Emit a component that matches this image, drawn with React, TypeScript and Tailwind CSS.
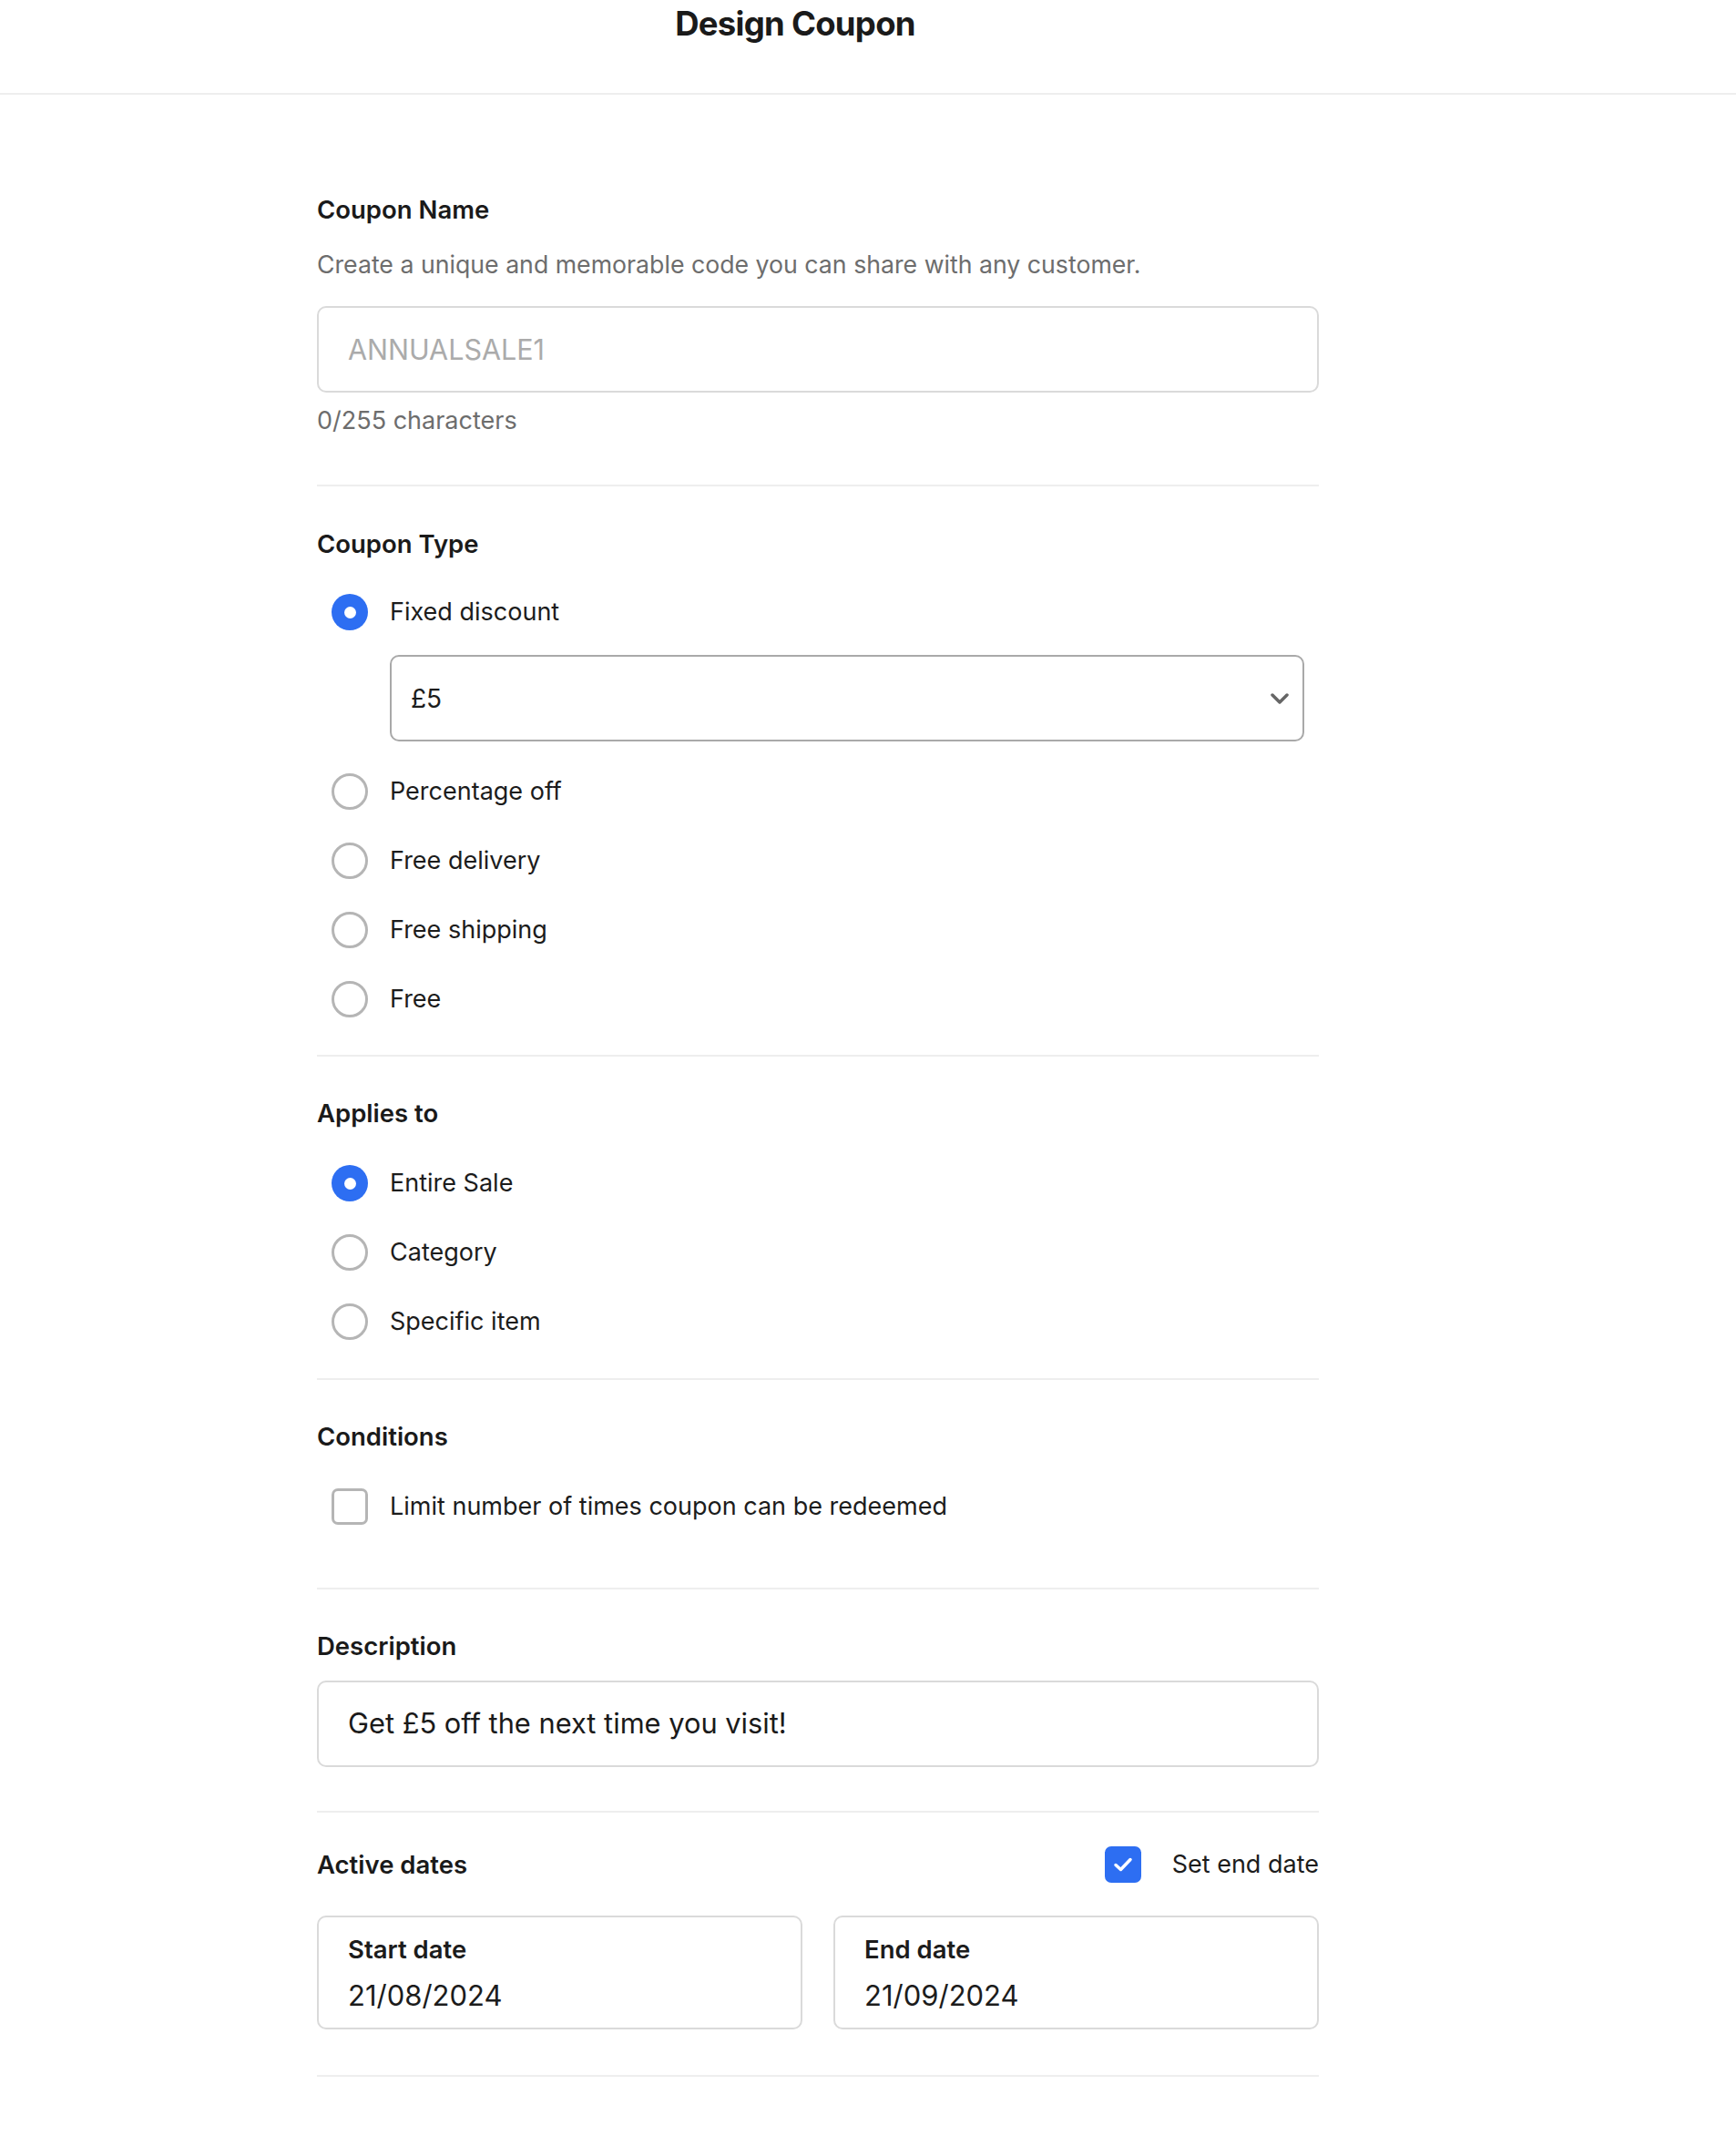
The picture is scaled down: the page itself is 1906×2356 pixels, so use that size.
import { useState } from "react";

type RadioRowProps = {
  label: string;
  checked?: boolean;
};

function RadioRow({ label, checked }: RadioRowProps) {
  return (
    <div className="flex h-[76px] items-center">
      <div className="flex w-[80px] items-center pl-4">
        {checked ? (
          <span className="flex h-10 w-10 items-center justify-center rounded-full bg-[#2d6ef2]">
            <span className="h-[13px] w-[13px] rounded-full bg-white" />
          </span>
        ) : (
          <span className="h-10 w-10 rounded-full border-[3px] border-[#b5b5b5]" />
        )}
      </div>
      <span className="text-[27px] leading-10 text-[#1c1c1c]">{label}</span>
    </div>
  );
}

function Divider({ className }: { className: string }) {
  return <div className={`h-[2px] w-full bg-[#eeeeee] ${className}`} />;
}

function SectionTitle({ children, className }: { children: React.ReactNode; className?: string }) {
  return (
    <h2 className={`text-[27.5px] leading-10 font-semibold text-[#1a1a1a] ${className ?? ""}`}>
      {children}
    </h2>
  );
}

export default function App() {
  const [endDate] = useState(true);

  return (
    <div
      className="min-h-[2356px] w-full bg-white"
      style={{ fontFamily: "Inter, 'Liberation Sans', sans-serif" }}
    >
      <header className="flex h-[104px] items-start border-b-2 border-[#eeeeee]">
        <h1 className="w-[1746px] pt-[2px] text-center text-[36.5px] leading-[48px] font-bold tracking-[-0.02em] text-[#1a1a1a]">
          Design Coupon
        </h1>
      </header>

      <main className="ml-[348px] w-[1100px] pt-[106px]">
        {/* Coupon name */}
        <SectionTitle>Coupon Name</SectionTitle>
        <p className="mt-5 text-[26.7px] leading-10 text-[#6d6d6d]">
          Create a unique and memorable code you can share with any customer.
        </p>
        <input
          className="mt-[26px] h-[95px] w-full rounded-[10px] border-2 border-[#dadada] px-8 text-[30.5px] text-[#1a1a1a] outline-none placeholder:text-[#ababab]"
          placeholder="ANNUALSALE1"
        />
        <p className="mt-[11px] text-[27px] leading-10 text-[#6d6d6d]">0/255 characters</p>
        <Divider className="mt-[50px]" />

        {/* Coupon type */}
        <SectionTitle className="mt-[43px]">Coupon Type</SectionTitle>
        <div className="mt-[17px]">
          <RadioRow label="Fixed discount" checked />
          <div className="ml-[80px] mt-[9px] mr-4 mb-[17px] flex h-[95px] items-center justify-between rounded-[10px] border-2 border-[#a9a9a9] pr-[14px] pl-[21px]">
            <span className="text-[28px] text-[#1c1c1c]">£5</span>
            <svg width="22" height="14" viewBox="0 0 22 14" fill="none">
              <path
                d="M3 3l8 8 8-8"
                stroke="#666666"
                strokeWidth="3.5"
                strokeLinecap="round"
                strokeLinejoin="round"
              />
            </svg>
          </div>
          <RadioRow label="Percentage off" />
          <RadioRow label="Free delivery" />
          <RadioRow label="Free shipping" />
          <RadioRow label="Free" />
        </div>
        <Divider className="mt-[23px]" />

        {/* Applies to */}
        <SectionTitle className="mt-[42px]">Applies to</SectionTitle>
        <div className="mt-[19px]">
          <RadioRow label="Entire Sale" checked />
          <RadioRow label="Category" />
          <RadioRow label="Specific item" />
        </div>
        <Divider className="mt-[24px]" />

        {/* Conditions */}
        <SectionTitle className="mt-[42px]">Conditions</SectionTitle>
        <div className="mt-[19px] flex h-[76px] items-center">
          <div className="flex w-[80px] items-center pl-4">
            <span className="h-10 w-10 rounded-[7px] border-[3px] border-[#b5b5b5]" />
          </div>
          <span className="text-[27px] leading-10 text-[#1c1c1c]">
            Limit number of times coupon can be redeemed
          </span>
        </div>
        <Divider className="mt-[51px]" />

        {/* Description */}
        <SectionTitle className="mt-[42px]">Description</SectionTitle>
        <div className="mt-[18px] flex h-[95px] items-center rounded-[10px] border-2 border-[#dadada] px-8">
          <span className="text-[30.8px] text-[#1a1a1a]">Get £5 off the next time you visit!</span>
        </div>
        <Divider className="mt-[48px]" />

        {/* Active dates */}
        <div className="mt-[37px] flex h-10 items-center justify-between">
          <SectionTitle>Active dates</SectionTitle>
          <label className="flex items-center gap-[34px]">
            <span className="flex h-10 w-10 items-center justify-center rounded-[7px] bg-[#2d6ef2]">
              {endDate && (
                <svg width="22" height="18" viewBox="0 0 22 18" fill="none">
                  <path
                    d="M3 9.5l5.5 5L19 3.5"
                    stroke="white"
                    strokeWidth="3.5"
                    strokeLinecap="round"
                    strokeLinejoin="round"
                  />
                </svg>
              )}
            </span>
            <span className="text-[27px] leading-10 text-[#1c1c1c]">Set end date</span>
          </label>
        </div>
        <div className="mt-[36px] grid grid-cols-2 gap-[34px]">
          <div className="flex h-[125px] flex-col rounded-[10px] border-2 border-[#dadada] px-8 pt-[17px]">
            <span className="text-[27.5px] leading-9 font-semibold text-[#1c1c1c]">Start date</span>
            <span className="mt-[13px] text-[31px] leading-10 text-[#1c1c1c]">21/08/2024</span>
          </div>
          <div className="flex h-[125px] flex-col rounded-[10px] border-2 border-[#dadada] px-8 pt-[17px]">
            <span className="text-[27.5px] leading-9 font-semibold text-[#1c1c1c]">End date</span>
            <span className="mt-[13px] text-[31px] leading-10 text-[#1c1c1c]">21/09/2024</span>
          </div>
        </div>
        <Divider className="mt-[50px]" />
      </main>
    </div>
  );
}
